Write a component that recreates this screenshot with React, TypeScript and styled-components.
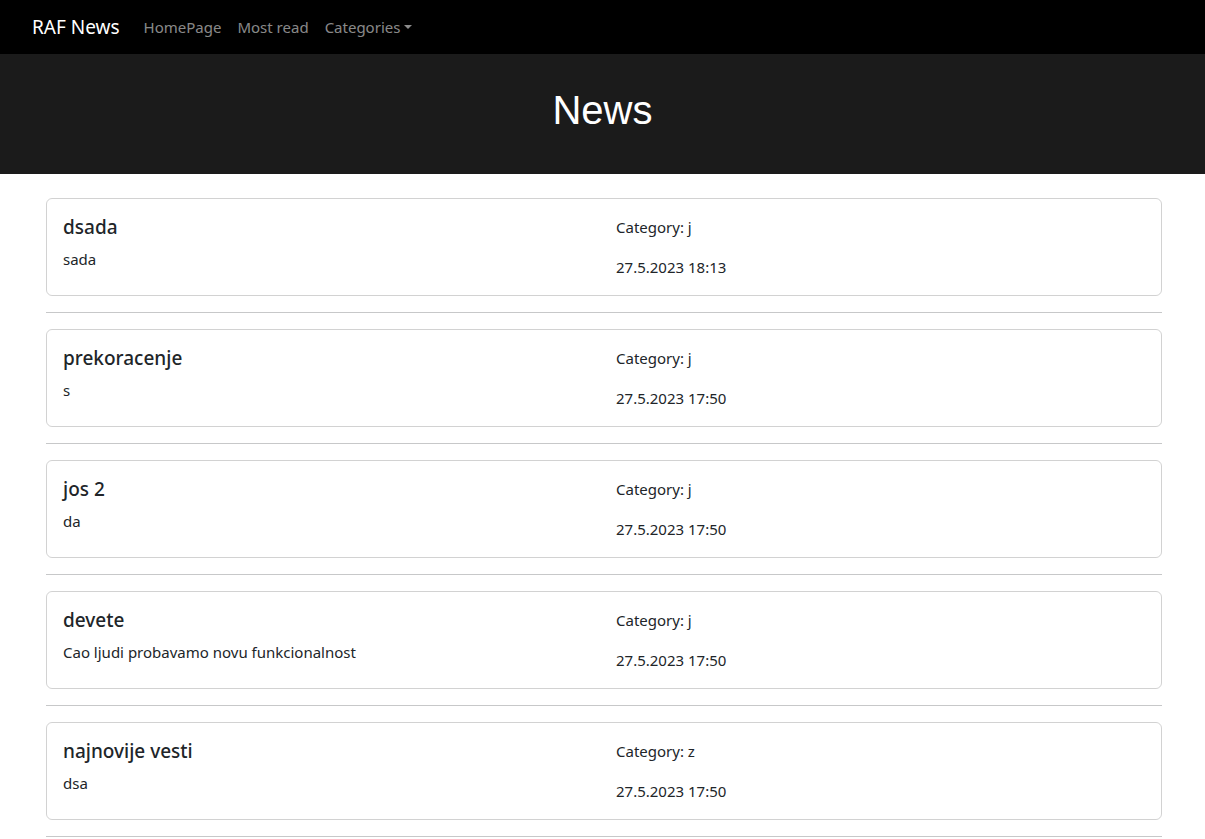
import React from "react";
import styled, { createGlobalStyle } from "styled-components";

const GlobalStyle = createGlobalStyle`
  * { box-sizing: border-box; }
  body {
    margin: 0;
    background: #fff;
    color: #212529;
    font-family: "Noto Sans", "Open Sans", "Liberation Sans", sans-serif;
    font-size: 16px;
    line-height: 1.5;
  }
`;

const Navbar = styled.nav`
  height: 54px;
  background: #000;
  display: flex;
  align-items: center;
  padding: 0 32px;
`;

const Brand = styled.a`
  color: #fff;
  font-size: 19px;
  line-height: 30px;
  margin-right: 16px;
  text-decoration: none;
`;

const NavLink = styled.a`
  color: rgba(255, 255, 255, 0.55);
  padding: 0 8px;
  font-size: 15px;
  line-height: 24px;
  text-decoration: none;
  display: inline-flex;
  align-items: center;
`;

const Caret = styled.span`
  display: inline-block;
  margin-left: 4px;
  border-top: 4.8px solid rgba(255, 255, 255, 0.55);
  border-left: 4.8px solid transparent;
  border-right: 4.8px solid transparent;
`;

const Hero = styled.header`
  background: #1b1b1b;
  padding: 32px 0;
  text-align: center;
`;

const HeroTitle = styled.h1`
  margin: 0 0 8px;
  color: #fff;
  font-family: "Liberation Sans", Arial, sans-serif;
  font-weight: 400;
  font-size: 40px;
  line-height: 48px;
`;

const Container = styled.main`
  max-width: 1119px;
  margin: 24px auto 0;
  padding-left: 3px;
`;

const Card = styled.article`
  border: 1px solid rgba(0, 0, 0, 0.175);
  border-radius: 6px;
  padding: 16px;
`;

const Row = styled.div`
  display: grid;
  grid-template-columns: 1fr 1fr;
  column-gap: 24px;
`;

const Col = styled.div``;

const Title = styled.h5`
  margin: 0 0 8px;
  font-size: 19px;
  font-weight: 500;
  line-height: 24px;
`;

const Text = styled.p`
  margin: 0 0 16px;
  font-size: 15px;
  line-height: 24px;
  &:last-child { margin-bottom: 0; }
`;

const Divider = styled.hr`
  margin: 16px 0;
  border: 0;
  border-top: 1px solid #212529;
  opacity: 0.25;
`;

const news = [
  { title: "dsada", text: "sada", category: "j", date: "27.5.2023 18:13" },
  { title: "prekoracenje", text: "s", category: "j", date: "27.5.2023 17:50" },
  { title: "jos 2", text: "da", category: "j", date: "27.5.2023 17:50" },
  { title: "devete", text: "Cao ljudi probavamo novu funkcionalnost", category: "j", date: "27.5.2023 17:50" },
  { title: "najnovije vesti", text: "dsa", category: "z", date: "27.5.2023 17:50" },
];

export default function App() {
  return (
    <>
      <GlobalStyle />
      <Navbar>
        <Brand href="#">RAF News</Brand>
        <NavLink href="#">HomePage</NavLink>
        <NavLink href="#">Most read</NavLink>
        <NavLink href="#">
          Categories<Caret />
        </NavLink>
      </Navbar>
      <Hero>
        <HeroTitle>News</HeroTitle>
      </Hero>
      <Container>
        {news.map((n, i) => (
          <React.Fragment key={i}>
            <Card>
              <Row>
                <Col>
                  <Title>{n.title}</Title>
                  <Text>{n.text}</Text>
                </Col>
                <Col>
                  <Text>Category: {n.category}</Text>
                  <Text>{n.date}</Text>
                </Col>
              </Row>
            </Card>
            <Divider />
          </React.Fragment>
        ))}
      </Container>
    </>
  );
}
